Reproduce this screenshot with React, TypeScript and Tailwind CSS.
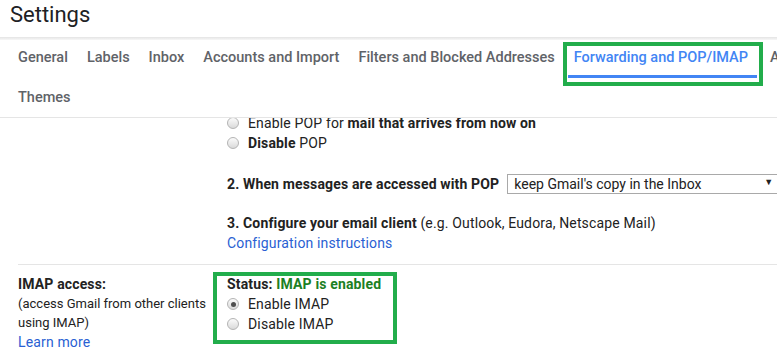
import React from "react";

function Radio({ checked = false }: { checked?: boolean }) {
  return (
    <span className="relative inline-flex h-[12px] w-[12px] shrink-0 items-center justify-center rounded-full border border-[#b4b4b4] bg-gradient-to-b from-[#fbfbfb] to-[#dadada]">
      {checked && <span className="h-[5px] w-[5px] rounded-full bg-[#4f4f4f]" />}
    </span>
  );
}

const tabs = [
  "General",
  "Labels",
  "Inbox",
  "Accounts and Import",
  "Filters and Blocked Addresses",
];

export default function App() {
  return (
    <div className="relative h-[357px] w-[777px] overflow-hidden bg-white font-['Roboto',Arial,sans-serif] text-[#222]">
      {/* Header */}
      <div className="flex h-[37px] items-start pl-[10px]">
        <span className="text-[22px] leading-[30px] text-[#202124]">Settings</span>
      </div>
      <div className="h-[3px] bg-gradient-to-b from-[#e4e4e4] to-[#f7f7f7]" />

      {/* Tabs */}
      <div className="border-b border-[#e5e5e5]">
        <div className="flex h-[38px] flex-nowrap whitespace-nowrap pl-[8.5px] text-[14.5px] font-medium text-[#5f6368]">
          {tabs.map((t) => (
            <div key={t} className="px-[9.5px] pt-[8px] leading-[20px]">
              {t}
            </div>
          ))}
          <div className="relative px-[9.5px] pt-[8px] leading-[20px] text-[#4285f4]">
            Forwarding and POP/IMAP
            <span className="absolute bottom-0 left-[3.5px] right-[0.5px] h-[3px] bg-[#4285f4]" />
            <span className="absolute bottom-[-8px] left-[-1.5px] right-[-5.5px] top-[2px] border-[4px] border-[#22ad4b]" />
          </div>
          <div className="pl-[12.5px] pt-[8px] leading-[20px]">Advanced</div>
        </div>
        <div className="flex h-[39px] pl-[8.5px] text-[14.5px] font-medium text-[#5f6368]">
          <div className="px-[9.5px] pt-[10px] leading-[20px]">Themes</div>
        </div>
      </div>

      {/* Content */}
      <div className="overflow-hidden text-[14px] tracking-[0.15px]">
        <div className="-mt-[5px]">
          {/* POP section */}
          <div className="pl-[227px]">
            <div className="flex h-[20px] items-center gap-[9px] whitespace-nowrap">
              <Radio />
              <span>
                Enable POP for <b>mail that arrives from now on</b>
              </span>
            </div>
            <div className="flex h-[20px] items-center gap-[9px]">
              <Radio />
              <span>
                <b>Disable</b> POP
              </span>
            </div>
            <div className="mt-[21px] flex h-[20px] items-center whitespace-nowrap">
              <b>2. When messages are accessed with POP</b>
              <div className="relative ml-[8px] flex h-[20px] w-[290px] shrink-0 items-center border border-[#a9a9a9] pl-[6px] tracking-normal">
                <span>keep Gmail's copy in the Inbox</span>
                <span className="absolute left-[256px] top-[1px] text-[9px] text-[#222]">▼</span>
              </div>
            </div>
            <div className="mt-[19px] flex h-[20px] items-center whitespace-nowrap">
              <span>
                <b>3. Configure your email client</b> (e.g. Outlook, Eudora, Netscape Mail)
              </span>
            </div>
            <div className="flex h-[20px] items-center text-[#2a5fd3]">Configuration instructions</div>
          </div>

          <div className="ml-[18px] mt-[11px] border-t border-[#e5e5e5]" />

          {/* IMAP section */}
          <div className="flex">
            <div className="w-[227px] shrink-0 pl-[18px] pt-[9px]">
              <div className="text-[14px] font-bold leading-[20px]">IMAP access:</div>
              <div className="whitespace-nowrap text-[13px] leading-[19px] tracking-normal text-[#222]">
                (access Gmail from other clients
                <br />
                using IMAP)
              </div>
              <div className="leading-[20px] text-[#2a5fd3]">Learn more</div>
            </div>
            <div className="pt-[9px]">
              <div className="relative">
                <span className="absolute bottom-[-10px] left-[-14px] top-[-2px] w-[184px] border-[4px] border-[#22ad4b]" />
                <div className="flex h-[20px] items-center whitespace-nowrap font-bold">
                  Status:&nbsp;<span className="text-[#1c7f24]">IMAP is enabled</span>
                </div>
                <div className="flex h-[20px] items-center gap-[9px]">
                  <Radio checked />
                  <span>Enable IMAP</span>
                </div>
                <div className="flex h-[20px] items-center gap-[9px]">
                  <Radio />
                  <span>Disable IMAP</span>
                </div>
              </div>
            </div>
          </div>
        </div>
      </div>
    </div>
  );
}
